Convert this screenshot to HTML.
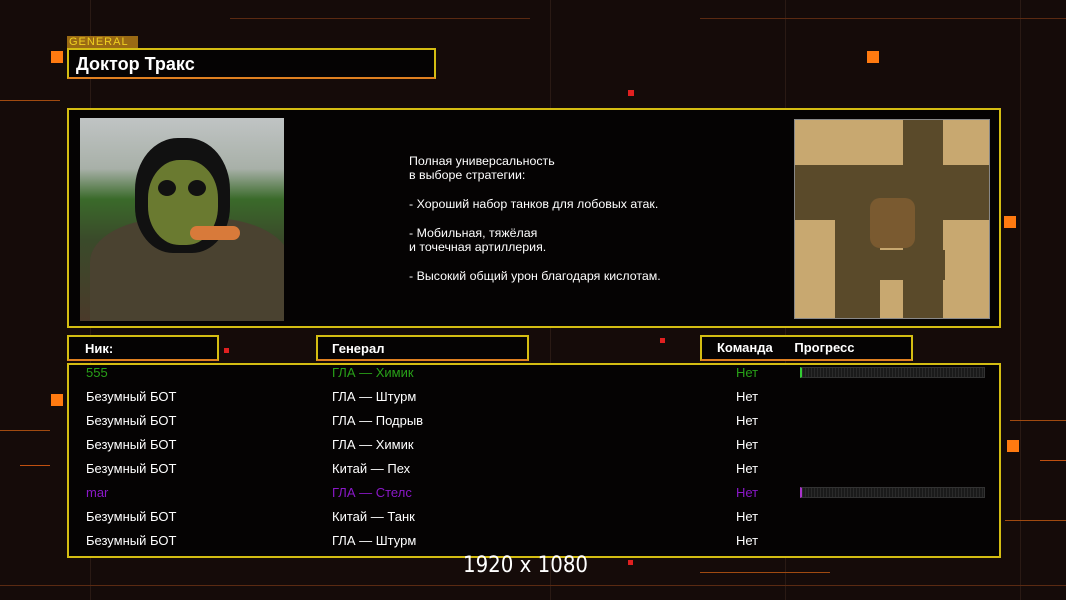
<!DOCTYPE html>
<html><head><meta charset="utf-8"><style>
*{margin:0;padding:0;box-sizing:border-box}
body{width:1066px;height:600px;background:#150b09;position:relative;overflow:hidden;font-family:"Liberation Sans",sans-serif;color:#fff}
.a{position:absolute}
.box{position:absolute;background:#050303;border:2px solid #d4bd12}
.sq{position:absolute;background:#ff7a10;width:12px;height:12px}
.ln{position:absolute;background:#5a2a12;height:1px}
.vl{position:absolute;background:#2a1a14;width:1px}
.row{position:absolute;font-size:13px;height:24px;line-height:24px}
.bar{position:absolute;left:800px;width:185px;height:11px;background:repeating-linear-gradient(90deg,#2a2a2a 0 1px,#1a1a1a 1px 3px);border:1px solid #333}
</style></head><body>
<div class="vl" style="left:90px;top:0;height:600px"></div>
<div class="vl" style="left:550px;top:0;height:600px"></div>
<div class="vl" style="left:785px;top:0;height:600px"></div>
<div class="vl" style="left:1020px;top:0;height:600px"></div>
<div class="ln" style="left:0;top:100px;width:60px;background:#a04a10"></div>
<div class="ln" style="left:0;top:430px;width:50px;background:#a04a10"></div>
<div class="ln" style="left:20px;top:465px;width:30px;background:#c05010"></div>
<div class="ln" style="left:1010px;top:420px;width:56px;background:#a04a10"></div>
<div class="ln" style="left:1040px;top:460px;width:26px;background:#c05010"></div>
<div class="ln" style="left:1005px;top:520px;width:61px;background:#a04a10"></div>
<div class="ln" style="left:700px;top:572px;width:130px;background:#a04a10"></div>
<div class="ln" style="left:230px;top:18px;width:300px"></div>
<div class="ln" style="left:700px;top:18px;width:366px"></div>
<div class="ln" style="left:0;top:585px;width:1066px"></div>
<div class="sq" style="left:51px;top:51px"></div>
<div class="sq" style="left:867px;top:51px"></div>
<div class="sq" style="left:1004px;top:216px"></div>
<div class="sq" style="left:51px;top:394px"></div>
<div class="sq" style="left:1007px;top:440px"></div>
<div class="a" style="left:628px;top:90px;width:6px;height:6px;background:#e02020"></div>
<div class="a" style="left:224px;top:348px;width:5px;height:5px;background:#e02020"></div>
<div class="a" style="left:660px;top:338px;width:5px;height:5px;background:#e02020"></div>
<div class="a" style="left:628px;top:560px;width:5px;height:5px;background:#e02020"></div>
<div class="a" style="left:67px;top:36px;width:71px;height:12px;background:#9a6a14;color:#f0d020;font-size:11px;line-height:12px;padding-left:2px;letter-spacing:1px">GENERAL</div>
<div class="box" style="left:67px;top:48px;width:369px;height:31px;border-bottom-color:#e08020"><div style="font-size:18px;font-weight:bold;padding:4px 0 0 7px">Доктор Тракс</div></div>
<div class="box" style="left:67px;top:108px;width:934px;height:220px"></div>
<div class="a" style="left:80px;top:118px;width:204px;height:203px;overflow:hidden;background:linear-gradient(180deg,#c0c4c4 0%,#a8b0a8 25%,#3a6a2a 40%,#3a4a2a 60%,#4a3a2a 100%)">
<div class="a" style="left:10px;top:100px;width:200px;height:110px;border-radius:40% 40% 0 0;background:#4a4230"></div>
<div class="a" style="left:55px;top:20px;width:95px;height:115px;border-radius:45% 45% 40% 40%;background:#111"></div>
<div class="a" style="left:68px;top:42px;width:70px;height:85px;border-radius:45%;background:#6a7a30"></div>
<div class="a" style="left:78px;top:62px;width:18px;height:16px;border-radius:50%;background:#111"></div>
<div class="a" style="left:108px;top:62px;width:18px;height:16px;border-radius:50%;background:#111"></div>
<div class="a" style="left:110px;top:108px;width:50px;height:14px;border-radius:7px;background:#d87a3a"></div>
</div>
<div class="a" style="left:409px;top:154px;font-size:12.4px;line-height:14.4px">Полная универсальность<br>в выборе стратегии:<br><br>- Хороший набор танков для лобовых атак.<br><br>- Мобильная, тяжёлая<br>и точечная артиллерия.<br><br>- Высокий общий урон благодаря кислотам.</div>
<div class="a" style="left:794px;top:119px;width:196px;height:200px;background:#c8a870;border:1px solid #888;overflow:hidden">
<div class="a" style="left:0;top:45px;width:196px;height:55px;background:#5a4a2a"></div>
<div class="a" style="left:108px;top:0;width:40px;height:200px;background:#5a4a2a"></div>
<div class="a" style="left:40px;top:45px;width:45px;height:155px;background:#5a4a2a"></div>
<div class="a" style="left:40px;top:130px;width:110px;height:30px;background:#5a4a2a"></div>
<div class="a" style="left:75px;top:78px;width:45px;height:50px;background:#7a5a30;border-radius:10px"></div>
</div>
<div class="box" style="left:67px;top:335px;width:152px;height:26px;border-bottom-color:#e08020"><div style="font-size:13px;font-weight:bold;padding:4px 0 0 16px">Ник:</div></div>
<div class="box" style="left:316px;top:335px;width:213px;height:26px;border-bottom-color:#e08020"><div style="font-size:13px;font-weight:bold;padding:4px 0 0 14px">Генерал</div></div>
<div class="box" style="left:700px;top:335px;width:213px;height:26px;border-bottom-color:#e08020"><div style="font-size:13px;font-weight:bold;padding:3px 0 0 15px">Команда&nbsp;&nbsp;&nbsp;&nbsp;&nbsp;&nbsp;Прогресс</div></div>
<div class="box" style="left:67px;top:363px;width:934px;height:195px"></div>
<div class="row" style="top:361px;left:86px;color:#28a018">555</div><div class="row" style="top:361px;left:332px;color:#28a018">ГЛА — Химик</div><div class="row" style="top:361px;left:736px;color:#28a018">Нет</div><div class="bar" style="top:367px;border-left:2px solid #3c3"></div>
<div class="row" style="top:385px;left:86px">Безумный БОТ</div><div class="row" style="top:385px;left:332px">ГЛА — Штурм</div><div class="row" style="top:385px;left:736px">Нет</div>
<div class="row" style="top:409px;left:86px">Безумный БОТ</div><div class="row" style="top:409px;left:332px">ГЛА — Подрыв</div><div class="row" style="top:409px;left:736px">Нет</div>
<div class="row" style="top:433px;left:86px">Безумный БОТ</div><div class="row" style="top:433px;left:332px">ГЛА — Химик</div><div class="row" style="top:433px;left:736px">Нет</div>
<div class="row" style="top:457px;left:86px">Безумный БОТ</div><div class="row" style="top:457px;left:332px">Китай — Пех</div><div class="row" style="top:457px;left:736px">Нет</div>
<div class="row" style="top:481px;left:86px;color:#8a18c8">mar</div><div class="row" style="top:481px;left:332px;color:#8a18c8">ГЛА — Стелс</div><div class="row" style="top:481px;left:736px;color:#8a18c8">Нет</div><div class="bar" style="top:487px;border-left:2px solid #a3c"></div>
<div class="row" style="top:505px;left:86px">Безумный БОТ</div><div class="row" style="top:505px;left:332px">Китай — Танк</div><div class="row" style="top:505px;left:736px">Нет</div>
<div class="row" style="top:529px;left:86px">Безумный БОТ</div><div class="row" style="top:529px;left:332px">ГЛА — Штурм</div><div class="row" style="top:529px;left:736px">Нет</div>
<div class="a" style="left:463px;top:553px;font-family:'DejaVu Sans Condensed','DejaVu Sans',sans-serif;font-size:22px">1920 x 1080</div>
</body></html>
